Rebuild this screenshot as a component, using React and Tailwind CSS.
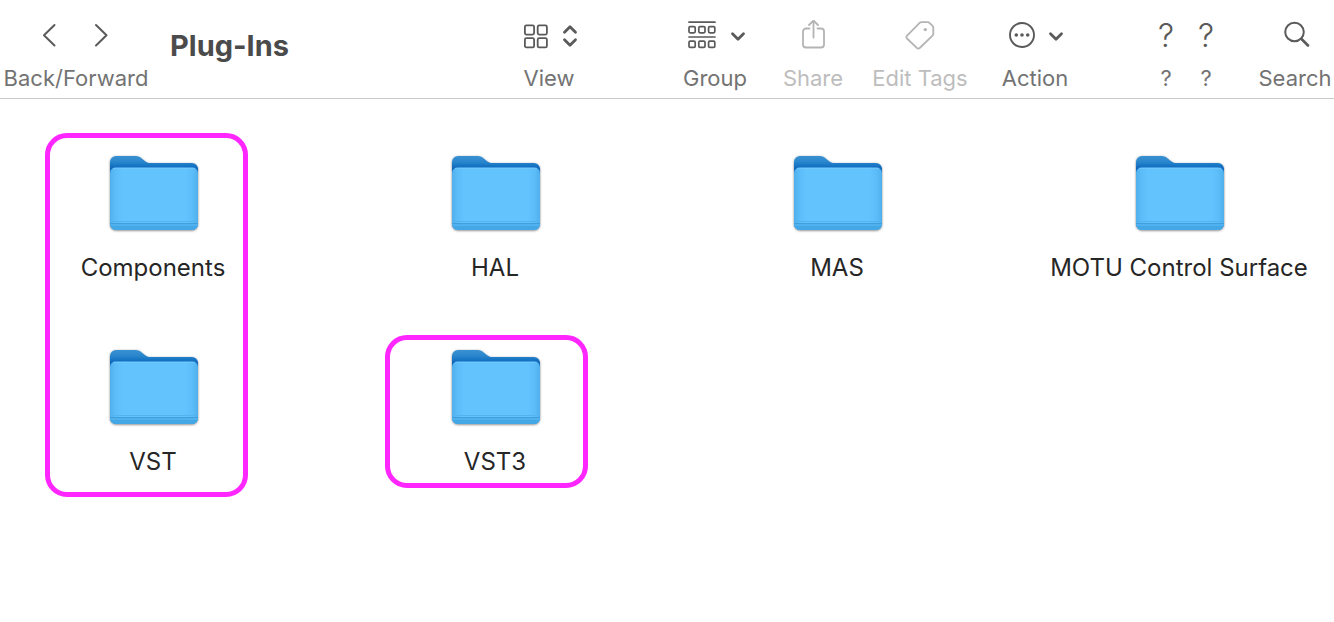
import clsx from 'clsx'

const folders = ['Components', 'HAL', 'MAS', 'MOTU Control Surface', 'VST', 'VST3']

function Folder() {
  return (
    <svg width="96" height="80" viewBox="0 0 96 80" aria-hidden="true">
      <defs>
        <linearGradient id="folder-back" gradientUnits="userSpaceOnUse" x1="0" y1="2" x2="0" y2="16">
          <stop offset="0" stopColor="#3a93d3" />
          <stop offset="0.5" stopColor="#2a86cc" />
          <stop offset="0.7" stopColor="#1b78c6" />
          <stop offset="1" stopColor="#0f62b8" />
        </linearGradient>
        <linearGradient id="folder-side" x1="0" y1="0" x2="1" y2="0">
          <stop offset="0" stopColor="#4fb0ec" />
          <stop offset="0.06" stopColor="#5cbcf8" />
          <stop offset="0.14" stopColor="#62c3fd" />
          <stop offset="0.86" stopColor="#62c3fd" />
          <stop offset="0.94" stopColor="#5cbcf8" />
          <stop offset="1" stopColor="#4fb0ec" />
        </linearGradient>
        <clipPath id="folder-front">
          <path d="M5 20q.5-5.500 6-5.500H87q5.500 0 6 5.500V71a6 6 0 0 1-6 6H11a6 6 0 0 1-6-6z" />
        </clipPath>
        <filter id="folder-shadow" x="-5%" y="-5%" width="110%" height="115%">
          <feDropShadow dx="0" dy="0.7" stdDeviation="0.9" floodColor="#000" floodOpacity="0.5" />
        </filter>
      </defs>
      <path
        d="M5 9a6 6 0 0 1 6-6h19.500c3 0 4.500 1 6.500 2.700l2.500 2c2 1.600 3.500 2.300 6 2.300H87a6 6 0 0 1 6 6V71a6 6 0 0 1-6 6H11a6 6 0 0 1-6-6z"
        fill="url(#folder-back)"
        filter="url(#folder-shadow)"
      />
      <g clipPath="url(#folder-front)">
        <path d="M5 14h88v64H5z" fill="url(#folder-side)" />
        <path d="M8 15.200h82" stroke="#7bcdfc" strokeWidth="0.8" />
        <path d="M5 68h88v1H5z" fill="#52b3ef" />
        <path d="M5 70h88v1H5z" fill="#3f9fdc" />
        <path d="M5 71h88v2H5z" fill="#50b1ee" />
        <path d="M5 73h88v4H5z" fill="#44a7e6" />
      </g>
    </svg>
  )
}

const line = {
  fill: 'none',
  stroke: 'currentColor',
  strokeLinecap: 'round',
  strokeLinejoin: 'round',
  height: 32,
  'aria-hidden': true,
}

function BackIcon() {
  return (
    <svg {...line} width="24" viewBox="1 0 24 32" strokeWidth="2">
      <path d="M17.500 5 7 15.300 17.500 25.500" />
    </svg>
  )
}

function ForwardIcon() {
  return (
    <svg {...line} width="24" viewBox="1 0 24 32" strokeWidth="2">
      <path d="M7 5l10.500 10.300L7 25.500" />
    </svg>
  )
}

function ViewIcon() {
  return (
    <svg {...line} width="58" viewBox="-4 0 58 32" strokeWidth="1.8">
      <rect x="0.9" y="5.400" width="9.200" height="9.200" rx="1.500" />
      <rect x="13.700" y="5.400" width="9.200" height="9.200" rx="1.500" />
      <rect x="0.9" y="18.200" width="9.200" height="9.200" rx="1.500" />
      <rect x="13.700" y="18.200" width="9.200" height="9.200" rx="1.500" />
      <path d="M40.500 12.200 46 6.800l5.500 5.400M40.500 19.800l5.500 5.400 5.500-5.400" strokeWidth="2.800" />
    </svg>
  )
}

function GroupIcon() {
  return (
    <svg {...line} width="62" viewBox="-4 0 62 32" strokeWidth="1.700">
      <path d="M1 2.200h26M1 17h26" />
      {[1, 10.800, 20.600].map(x => (
        <g key={x}>
          <rect x={x} y="6.600" width="6.200" height="6.200" rx="1.200" />
          <rect x={x} y="21.200" width="6.200" height="6.200" rx="1.200" />
        </g>
      ))}
      <path d="M44.500 13.800l5.500 5.400 5.500-5.400" strokeWidth="2.800" />
    </svg>
  )
}

function ShareIcon() {
  return (
    <svg {...line} width="26" viewBox="-2 0 26 32" strokeWidth="1.800">
      <path d="M7.500 8.500H4a3 3 0 0 0-3 3v13a3 3 0 0 0 3 3h15a3 3 0 0 0 3-3v-13a3 3 0 0 0-3-3h-3.500" />
      <path d="M11.500 17.500V1M7 5l4.500-4.500L16 5" />
    </svg>
  )
}

function TagIcon() {
  return (
    <svg {...line} width="30" viewBox="0 0 30 32" strokeWidth="1.800">
      <path d="M16.500 2.200h6q1.300 0 2.200.9l2.700 2.600q.9.900.9 2.200v5.600q0 1.400-1 2.400L14.700 28q-1.500 1.200-2.900-.1L2 18.500q-1.300-1.500.1-2.900L14.400 3.200q.9-1 2.100-1z" />
      <circle cx="20.300" cy="9.600" r="1.700" fill="currentColor" stroke="none" />
    </svg>
  )
}

function ActionIcon() {
  return (
    <svg {...line} width="58" viewBox="-2 0 58 32" strokeWidth="1.900">
      <circle cx="14" cy="15" r="12" />
      <g fill="currentColor" stroke="none">
        <circle cx="8.300" cy="15" r="1.800" />
        <circle cx="14" cy="15" r="1.800" />
        <circle cx="19.700" cy="15" r="1.800" />
      </g>
      <path d="M42.500 13.800l5.500 5.400 5.500-5.400" strokeWidth="2.800" />
    </svg>
  )
}

function SearchIcon() {
  return (
    <svg {...line} width="30" viewBox="-4 0 30 32" strokeWidth="2">
      <circle cx="10.500" cy="12" r="9.300" />
      <path d="M17.500 19l6.500 6.500" strokeWidth="2.600" />
    </svg>
  )
}

function Unknown() {
  return <span className="text-[32px] leading-8 font-light">?</span>
}

function ToolbarButton({ icon, label, disabled, className }) {
  return (
    <button
      disabled={disabled}
      className={clsx(
        'flex shrink-0 flex-col items-center gap-3 whitespace-nowrap',
        disabled ? 'text-[#b4b4b4]' : 'text-[#5a5a5a]',
        className
      )}
    >
      <span className="flex h-8 items-center">{icon}</span>
      <span className={clsx('text-[22px] leading-7', disabled ? 'text-[#bdbdbd]' : 'text-[#737373]')}>
        {label}
      </span>
    </button>
  )
}

export default function App() {
  return (
    <div className="min-h-screen bg-white font-['Inter','Liberation_Sans',sans-serif] text-[#262626]">
      {/* Toolbar */}
      <header className="flex items-start border-b border-[#c8c8c8] pt-5 pr-[3px] pb-1.5 pl-1">
        <div className="flex w-36 shrink-0 flex-col items-center gap-3">
          <div className="flex h-8 gap-7 text-[#5a5a5a]">
            <button aria-label="Back"><BackIcon /></button>
            <button aria-label="Forward"><ForwardIcon /></button>
          </div>
          <span className="text-[22px] leading-7 text-[#737373]">Back/Forward</span>
        </div>
        <h1 className="grow pt-2 pl-[22px] text-[29px] leading-9 font-bold whitespace-nowrap text-[#4b4b4b]">
          Plug-Ins
        </h1>

        <ToolbarButton icon={<ViewIcon />} label="View" className="mr-[106px] w-14" />
        <ToolbarButton icon={<GroupIcon />} label="Group" className="mr-[34px] w-16" />
        <ToolbarButton icon={<ShareIcon />} label="Share" className="mr-[27px] w-16" disabled />
        <ToolbarButton icon={<TagIcon />} label="Edit Tags" className="mr-[35px] w-24" disabled />
        <ToolbarButton icon={<ActionIcon />} label="Action" className="mr-[79px] w-16" />
        <ToolbarButton icon={<Unknown />} label="?" className="w-10" />
        <ToolbarButton icon={<Unknown />} label="?" className="mr-[33px] w-10" />
        <ToolbarButton icon={<SearchIcon />} label="Search" className="w-[72px]" />
      </header>

      {/* Folder grid, the outer columns run slightly past the window */}
      <main className="relative overflow-x-hidden">
        <ul className="-mr-4 -ml-[18px] grid grid-cols-4 gap-y-[63px] pt-[54px] pb-12">
          {folders.map(name => (
            <li key={name} className="flex flex-col items-center gap-[19px]">
              <Folder />
              <span className="text-[24px] leading-8 whitespace-nowrap">{name}</span>
            </li>
          ))}
        </ul>

        {/* Highlight boxes */}
        <div className="pointer-events-none absolute top-[34px] left-[45px] h-[364px] w-[203px] rounded-[22px] border-5 border-[#ff26ff]" />
        <div className="pointer-events-none absolute top-[236px] left-[385px] h-[153px] w-[203px] rounded-[22px] border-5 border-[#ff26ff]" />
      </main>
    </div>
  )
}
